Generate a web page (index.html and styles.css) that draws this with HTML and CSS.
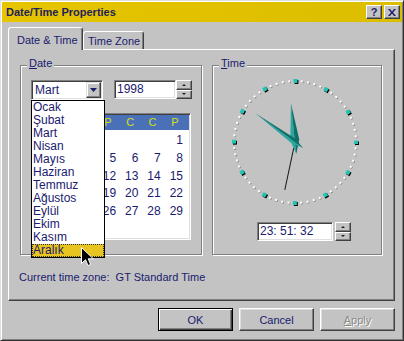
FILE: index.html
```html
<!DOCTYPE html>
<html lang="en">
<head>
<meta charset="UTF-8">
<title>Date/Time Properties</title>
<link rel="stylesheet" href="styles.css">
</head>
<body>

<div class="window">
    <div class="titlebar">
        <span class="title">Date/Time Properties</span>
        <div class="title-btns">
            <span class="tbtn">?</span>
            <span class="tbtn">
                <svg width="8" height="7" viewBox="0 0 8 7"><path d="M0 0h2l2 2.4L6 0h2L5 3.5 8 7H6L4 4.6 2 7H0l3-3.5z" fill="#1c1c6c"/></svg>
            </span>
        </div>
    </div>

    <div class="content">
        <div class="tabs">
            <div class="tab active">Date &amp; Time</div>
            <div class="tab">Time Zone</div>
        </div>

        <div class="panel">
            <div class="groups">
                <!-- Date -->
                <div class="group date-group">
                    <span class="group-label"><u>D</u>ate</span>
                    <div class="date-row">
                        <div class="combo">
                            <span class="combo-value">Mart</span>
                            <span class="combo-btn">
                                <svg width="7" height="4" viewBox="0 0 7 4"><path d="M0 0h7L3.5 4z" fill="#1c1c6c"/></svg>
                            </span>
                            <ul class="month-list">
                                <li>Ocak</li>
                                <li>Şubat</li>
                                <li>Mart</li>
                                <li>Nisan</li>
                                <li>Mayıs</li>
                                <li>Haziran</li>
                                <li>Temmuz</li>
                                <li>Ağustos</li>
                                <li>Eylül</li>
                                <li>Ekim</li>
                                <li>Kasım</li>
                                <li class="current">Aralık</li>
                            </ul>
                        </div>
                        <div class="spin-field">
                            <span class="field year">1998</span>
                            <span class="spinner">
                                <span class="spin"><i class="arrow-up"></i></span>
                                <span class="spin"><i class="arrow-down"></i></span>
                            </span>
                        </div>
                    </div>

                    <!-- first three columns sit under the open month list -->
                    <div class="calendar">
                        <div class="cal-head">
                            <span></span><span></span><span></span><span>P</span><span>C</span><span>C</span><span>P</span>
                        </div>
                        <div class="cal-days">
                            <span></span><span></span><span></span><span></span><span></span><span></span><span>1</span>
                            <span></span><span></span><span></span><span>5</span><span>6</span><span>7</span><span>8</span>
                            <span></span><span></span><span></span><span>12</span><span>13</span><span>14</span><span>15</span>
                            <span></span><span></span><span></span><span>19</span><span>20</span><span>21</span><span>22</span>
                            <span></span><span></span><span></span><span>26</span><span>27</span><span>28</span><span>29</span>
                        </div>
                    </div>
                </div>

                <!-- Time -->
                <div class="group time-group">
                    <span class="group-label"><u>T</u>ime</span>
                    <svg class="clock" width="136" height="136" viewBox="0 0 136 136">
                        <circle cx="68.8" cy="68.8" r="61" fill="none" stroke="#8c8c8c" stroke-width="2" stroke-dasharray="2 4.3879" stroke-dashoffset="1"/>
                        <circle cx="68" cy="68" r="61" fill="none" stroke="#fff" stroke-width="2" stroke-dasharray="2 4.3879" stroke-dashoffset="1"/>
                        <circle cx="69" cy="69" r="61" fill="none" stroke="#000" stroke-width="4" stroke-dasharray="4 27.9395" stroke-dashoffset="2"/>
                        <circle cx="68" cy="68" r="61" fill="none" stroke="#22c4b4" stroke-width="4" stroke-dasharray="4 27.9395" stroke-dashoffset="2"/>

                        <line x1="68" y1="74" x2="68" y2="117" stroke="#1a1a1a" stroke-width="1" transform="rotate(12 68 68)"/>
                        <g transform="rotate(354 68 68)">
                            <polygon points="68,29 63.5,66 68,80" fill="#2aa8a0"/>
                            <polygon points="68,29 72.5,66 68,80" fill="#0e6e6a"/>
                        </g>
                        <g transform="rotate(306 68 68)">
                            <polygon points="68,19 65,66 68,78" fill="#2aa8a0"/>
                            <polygon points="68,19 71,66 68,78" fill="#0e6e6a"/>
                        </g>
                    </svg>
                    <div class="time-row">
                        <span class="field time">23: 51: 32</span>
                        <span class="spinner">
                            <span class="spin"><i class="arrow-up"></i></span>
                            <span class="spin"><i class="arrow-down"></i></span>
                        </span>
                    </div>
                </div>
            </div>

            <p class="zone">Current time zone:&nbsp; GT Standard Time</p>
        </div>

        <div class="actions">
            <button class="btn default">OK</button>
            <button class="btn">Cancel</button>
            <button class="btn" disabled><u>A</u>pply</button>
        </div>
    </div>

    <svg class="cursor" width="13" height="20" viewBox="0 0 13 20">
        <path d="M0.5 0.5V16.5L4.5 12.7L7 18.5L9.6 17.4L7.2 11.8H12.3Z" fill="#000" stroke="#fff" stroke-width="1"/>
    </svg>
</div>

</body>
</html>
```

FILE: styles.css
```css
/* Base */
* { box-sizing: border-box; }

body {
    margin: 0;
    background: #c3c3c3;
    font-family: "Liberation Sans", Arial, sans-serif;
    font-size: 11px;
    color: #1a1a6e;
}

.window {
    position: relative;
    width: 404px;
    height: 341px;
    padding: 1px;
    border: 1px solid;
    border-color: #dfdfdf #303030 #303030 #dfdfdf;
    box-shadow: inset 1px 1px #fff, inset -1px -1px #808080;
}

/* Title bar */
.titlebar {
    height: 20px;
    display: flex;
    align-items: center;
    padding: 0 2px;
    background: linear-gradient(to right, #e6c400, #dcbe00);
}
.title {
    font-weight: bold;
    color: #1e1e5a;
    padding-left: 2px;
}
.title-btns {
    margin-left: auto;
    display: flex;
    gap: 2px;
}
.tbtn {
    width: 16px;
    height: 14px;
    display: flex;
    align-items: center;
    justify-content: center;
    background: #c3c3c3;
    border: 1px solid;
    border-color: #fff #404040 #404040 #fff;
    box-shadow: inset -1px -1px #808080;
    font-weight: bold;
    font-size: 11px;
    color: #1c1c6c;
}

/* Tabs */
.content { padding: 5px 7px 0 6px; }

.tabs {
    display: flex;
    align-items: flex-end;
    height: 22px;
}
.tab {
    height: 18px;
    width: 61px;
    padding: 1px 0 0 4px;
    line-height: 16px;
    border: 1px solid;
    border-bottom: none;
    border-color: #fff #404040 transparent #fff;
    border-radius: 3px 3px 0 0;
    box-shadow: inset -1px 0 #808080;
}
.tab.active {
    position: relative;
    z-index: 1;
    width: 75px;
    height: 23px;
    margin-bottom: -1px;
    padding: 2px 0 0 8px;
    line-height: 20px;
    background: #c3c3c3;
}

.panel {
    height: 252px;
    padding: 15px 12px 0 11px;
    border: 1px solid;
    border-color: #fff #404040 #404040 #fff;
    box-shadow: inset -1px -1px #808080;
}

/* Group boxes */
.groups {
    display: flex;
    gap: 10px;
}
.group {
    position: relative;
    border: 1px solid #808080;
    box-shadow: 1px 1px #fff, inset 1px 1px #fff;
}
.group-label {
    position: absolute;
    top: -9px;
    left: 6px;
    padding: 0 2px;
    line-height: 13px;
    background: #c3c3c3;
}

.date-group {
    width: 182px;
    padding: 14px 9px 14px 10px;
}
.date-row {
    display: flex;
    gap: 11px;
}

/* Fields */
.combo, .field, .calendar {
    background: #fff;
    border: 1px solid;
    border-color: #808080 #fff #fff #808080;
    box-shadow: inset 1px 1px #404040, inset -1px -1px #dfdfdf;
}
.combo {
    position: relative;
    display: flex;
    width: 73px;
    height: 20px;
    padding: 1px;
}
.combo-value {
    flex: 1;
    padding-left: 2px;
    line-height: 16px;
    font-size: 12px;
}
.combo-btn {
    width: 15px;
    height: 16px;
    display: flex;
    align-items: center;
    justify-content: center;
    background: #c3c3c3;
    border: 1px solid;
    border-color: #dfdfdf #404040 #404040 #dfdfdf;
    box-shadow: inset -1px -1px #808080, inset 1px 1px #fff;
}

.month-list {
    position: absolute;
    top: 19px;
    left: -1px;
    z-index: 2;
    width: 74px;
    margin: 0;
    padding: 0;
    list-style: none;
    background: #fff;
    border: 1px solid #000;
    font-size: 12px;
}
.month-list li {
    height: 13px;
    line-height: 13px;
    padding-left: 1px;
}
.month-list li.current {
    background: #e8c420;
    outline: 1px dotted #303030;
    outline-offset: -1px;
}

.spin-field { display: flex; }
.field {
    height: 19px;
    padding-left: 2px;
    line-height: 17px;
    font-size: 12px;
}
.year { width: 62px; }

.spinner {
    display: flex;
    flex-direction: column;
    width: 16px;
    height: 19px;
}
.spin {
    flex: 1;
    display: flex;
    align-items: center;
    justify-content: center;
    border: 1px solid;
    border-color: #fff #404040 #404040 #fff;
    box-shadow: inset -1px -1px #808080;
}
.arrow-up, .arrow-down {
    width: 0;
    height: 0;
    border-left: 2px solid transparent;
    border-right: 2px solid transparent;
}
.arrow-up { border-bottom: 2px solid #202020; }
.arrow-down { border-top: 2px solid #202020; }

/* Calendar */
.calendar {
    width: 160px;
    height: 127px;
    margin-top: 13px;
    padding: 1px;
}
.cal-head, .cal-days {
    display: grid;
    grid-template-columns: repeat(7, 1fr);
}
.cal-head {
    height: 15px;
    line-height: 15px;
    background: #4a70b8;
    color: #d4e014;
}
.cal-head span {
    text-align: center;
    padding-right: 6px;
}
.cal-days {
    grid-template-rows: repeat(6, 1fr);
    height: 107px;
    margin-top: 1px;
    font-size: 12px;
}
.cal-days span {
    align-self: center;
    text-align: right;
    padding-right: 6px;
}

/* Time */
.time-group {
    width: 170px;
    padding-top: 8px;
}
.clock {
    display: block;
    margin-left: 14px;
}
.time-row {
    display: flex;
    gap: 2px;
    margin-top: 12px;
    padding-left: 44px;
}
.time { width: 76px; }

.zone {
    margin: 16px 0 0 -1px;
    line-height: 13px;
}

/* Buttons */
.actions {
    display: flex;
    justify-content: flex-end;
    gap: 6px;
    margin-top: 7px;
}
.btn {
    width: 75px;
    height: 23px;
    padding: 0;
    font-family: inherit;
    font-size: 11px;
    color: #1a1a6e;
    background: #c3c3c3;
    border: 1px solid;
    border-color: #fff #404040 #404040 #fff;
    box-shadow: inset -1px -1px #808080, inset 1px 1px #dfdfdf;
}
.btn.default {
    border-color: #000;
    box-shadow: inset 1px 1px #fff, inset -1px -1px #404040, inset -2px -2px #808080;
}
.btn:disabled {
    color: #8a8a8a;
    text-shadow: 1px 1px #fff;
}

.cursor {
    position: absolute;
    left: 80px;
    top: 246px;
    z-index: 3;
}
```
